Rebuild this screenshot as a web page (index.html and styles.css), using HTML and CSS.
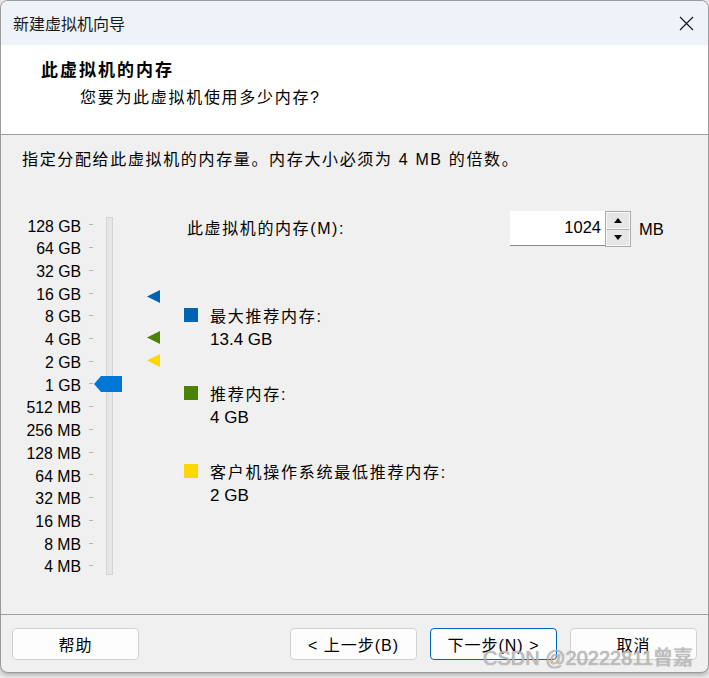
FILE: index.html
```html
<!DOCTYPE html>
<html lang="zh-CN">
<head>
<meta charset="utf-8">
<title>新建虚拟机向导</title>
<link rel="stylesheet" href="styles.css">
</head>
<body>
<div class="window">
  <div class="titlebar">
    <span class="title">新建虚拟机向导</span>
    <svg class="close" width="15" height="15" viewBox="0 0 15 15"><path d="M1 1L14 14M14 1L1 14" stroke="#1b1b1b" stroke-width="1.2" fill="none"/></svg>
  </div>
  <div class="header">
    <div class="h-title">此虚拟机的内存</div>
    <div class="h-sub">您要为此虚拟机使用多少内存?</div>
  </div>
  <div class="content">
    <div class="intro">指定分配给此虚拟机的内存量。内存大小必须为 4 MB 的倍数。</div>
    <div class="main">
      <div class="slider">
        <div class="labels">
          <div>128 GB</div><div>64 GB</div><div>32 GB</div><div>16 GB</div>
          <div>8 GB</div><div>4 GB</div><div>2 GB</div><div>1 GB</div>
          <div>512 MB</div><div>256 MB</div><div>128 MB</div><div>64 MB</div>
          <div>32 MB</div><div>16 MB</div><div>8 MB</div><div>4 MB</div>
        </div>
        <div class="ticks">
          <span><i></i></span><span><i></i></span><span><i></i></span><span><i></i></span>
          <span><i></i></span><span><i></i></span><span><i></i></span><span><i></i></span>
          <span><i></i></span><span><i></i></span><span><i></i></span><span><i></i></span>
          <span><i></i></span><span><i></i></span><span><i></i></span><span><i></i></span>
        </div>
        <div class="track"></div>
        <svg class="marker m-max" width="13" height="13" viewBox="0 0 13 13"><polygon points="0,6.5 13,0 13,13" fill="#0063b1"/></svg>
        <svg class="marker m-rec" width="13" height="13" viewBox="0 0 13 13"><polygon points="0,6.5 13,0 13,13" fill="#498205"/></svg>
        <svg class="marker m-min" width="13" height="13" viewBox="0 0 13 13"><polygon points="0,6.5 13,0 13,13" fill="#fcd800"/></svg>
        <svg class="thumb" width="28" height="16" viewBox="0 0 28 16"><polygon points="7,0 28,0 28,16 7,16 0,8" fill="#0078d7"/></svg>
      </div>
      <div class="panel">
        <div class="mem-row">
          <span class="mem-label">此虚拟机的内存(M):</span>
          <div class="spin">
            <div class="spin-input">1024</div>
            <div class="spin-btns">
              <span class="spin-btn"><i class="up"></i></span>
              <span class="spin-btn down-btn"><i class="down"></i></span>
            </div>
          </div>
          <span class="unit">MB</span>
        </div>
        <div class="legend">
          <div class="item">
            <div class="row"><span class="sq blue"></span><span class="name">最大推荐内存:</span></div>
            <div class="val">13.4 GB</div>
          </div>
          <div class="item">
            <div class="row"><span class="sq green"></span><span class="name">推荐内存:</span></div>
            <div class="val">4 GB</div>
          </div>
          <div class="item">
            <div class="row"><span class="sq yellow"></span><span class="name">客户机操作系统最低推荐内存:</span></div>
            <div class="val">2 GB</div>
          </div>
        </div>
      </div>
    </div>
  </div>
  <div class="footer">
    <button class="btn">帮助</button>
    <div class="nav">
      <button class="btn">&lt; 上一步(B)</button>
      <button class="btn primary">下一步(N) &gt;</button>
      <button class="btn">取消</button>
    </div>
  </div>
</div>
<div class="watermark">CSDN @20222811曾嘉</div>
</body>
</html>
```
FILE: styles.css
```css
html, body {
  margin: 0;
  padding: 0;
  background: #e9e9e9;
}
body {
  width: 709px;
  height: 678px;
  position: relative;
  overflow: hidden;
  font-family: "Liberation Sans", "Noto Sans CJK SC", sans-serif;
  font-size: 16px;
  color: #000;
}
.window {
  box-sizing: border-box;
  width: 709px;
  height: 673px;
  border: 1px solid #9a9a9a;
  border-radius: 8px;
  overflow: hidden;
  background: #f0f0f0;
  box-shadow: 0 2px 4px rgba(0, 0, 0, 0.25);
  display: flex;
  flex-direction: column;
}
.titlebar {
  height: 44px;
  flex: none;
  background: #eef2f9;
  display: flex;
  align-items: center;
  justify-content: space-between;
  padding: 0 14px 0 12px;
}
.title {
  font-family: "Noto Sans CJK SC", sans-serif;
  font-size: 16px;
  color: #1a1a1a;
}
.close {
  display: block;
}
.header {
  box-sizing: border-box;
  height: 90px;
  flex: none;
  background: #fff;
  border-bottom: 1px solid #a0a0a0;
  padding: 12px 0 0 40px;
}
.h-title {
  font-family: "Noto Sans CJK SC", sans-serif;
  font-size: 17px;
  font-weight: bold;
  letter-spacing: 2px;
  line-height: 24px;
}
.h-sub {
  font-size: 16px;
  letter-spacing: 1.7px;
  line-height: 24px;
  margin: 5px 0 0 39px;
}
.content {
  height: 479px;
  flex: none;
  padding: 13px 0 0 0;
  box-sizing: border-box;
}
.intro {
  padding-left: 21px;
  line-height: 24px;
  letter-spacing: 1.65px;
}
.main {
  display: flex;
  margin-top: 39px;
}
.slider {
  position: relative;
  width: 183px;
  flex: none;
  display: flex;
  margin-top: 2.6px;
  align-self: flex-start;
}
.labels {
  width: 80px;
  text-align: right;
  font-size: 15.8px;
  padding-top: 2px;
}
.labels div {
  height: 22.733px;
  line-height: 22.733px;
}
.ticks {
  margin-left: 8px;
  width: 4px;
}
.ticks span {
  height: 22.733px;
  display: flex;
  align-items: center;
}
.ticks i {
  display: block;
  width: 4px;
  height: 1px;
  background: #b4b4b4;
}
.track {
  box-sizing: border-box;
  margin-left: 13px;
  margin-top: 3.4px;
  width: 7px;
  height: 358px;
  background: #e6e6e6;
  border: 1px solid #d4d4d4;
}
.marker {
  position: absolute;
  left: 146px;
}
.m-max { top: 76.6px; }
.m-rec { top: 117.6px; }
.m-min { top: 140.9px; }
.thumb {
  position: absolute;
  left: 93px;
  top: 162.8px;
}
.panel {
  flex: 1;
}
.mem-row {
  display: flex;
  align-items: flex-start;
  height: 36px;
}
.mem-label {
  width: 323px;
  margin-left: 3px;
  flex: none;
  letter-spacing: 1.6px;
  line-height: 36px;
}
.spin {
  display: flex;
}
.spin-input {
  box-sizing: border-box;
  width: 95px;
  height: 35px;
  background: #fff;
  border-bottom: 1px solid #8a8a8a;
  text-align: right;
  padding-right: 4px;
  font-size: 16.5px;
  line-height: 32px;
}
.spin-btns {
  box-sizing: border-box;
  width: 26px;
  height: 36px;
  border: 1px solid #acacac;
  background: #e6e6e6;
  display: flex;
  flex-direction: column;
}
.spin-btn {
  flex: 1;
  display: flex;
  align-items: center;
  justify-content: center;
  border: 1px solid #f7f7f7;
}
.down-btn {
  border-top: 1px solid #b4b4b4;
}
.up {
  width: 0;
  height: 0;
  border-left: 4.5px solid transparent;
  border-right: 4.5px solid transparent;
  border-bottom: 5px solid #000;
}
.down {
  width: 0;
  height: 0;
  border-left: 4.5px solid transparent;
  border-right: 4.5px solid transparent;
  border-top: 5px solid #000;
}
.unit {
  margin-left: 8px;
  font-size: 16.5px;
  line-height: 36px;
}
.legend {
  margin-top: 56px;
}
.item {
  margin-bottom: 29px;
}
.row {
  display: flex;
  align-items: center;
  height: 24px;
}
.sq {
  width: 14px;
  height: 14px;
  margin-right: 12px;
  flex: none;
}
.blue { background: #0063b1; }
.green { background: #498205; }
.yellow { background: #fcd800; }
.name {
  letter-spacing: 1.75px;
}
.val {
  padding-left: 26px;
  font-size: 17px;
  line-height: 24px;
  padding-top: 1px;
}
.footer {
  flex: 1;
  border-top: 1px solid #a0a0a0;
  display: flex;
  justify-content: space-between;
  align-items: flex-start;
  padding: 13px 11px 0 11px;
}
.nav {
  display: flex;
  gap: 13px;
}
.btn {
  box-sizing: border-box;
  width: 127px;
  height: 32px;
  background: #fdfdfd;
  border: 1px solid #d0d0d0;
  border-radius: 4px;
  font-family: "Liberation Sans", "Noto Sans CJK SC", sans-serif;
  font-size: 16px;
  letter-spacing: 1px;
  color: #000;
  padding: 0;
}
.primary {
  border-color: #0067c0;
}
.watermark {
  position: absolute;
  left: 483px;
  top: 645px;
  font-size: 20px;
  line-height: 26px;
  color: rgba(205, 205, 205, 0.8);
  text-shadow: 0 0 1px rgba(90, 90, 90, 0.8);
  white-space: nowrap;
}
```
